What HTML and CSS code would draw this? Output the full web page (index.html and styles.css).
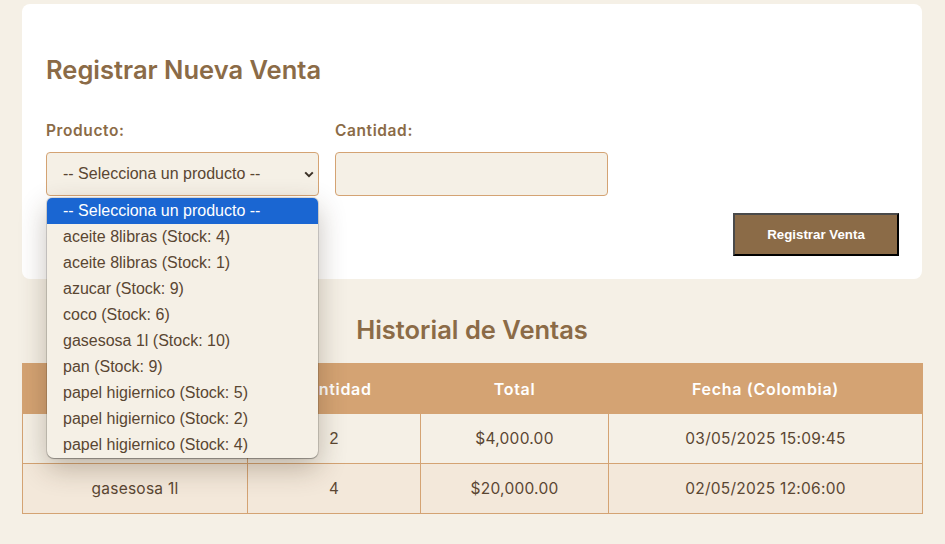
FILE: index.html
```html
<!DOCTYPE html>
<html lang="es">
<head>
<meta charset="utf-8">
<title>Ventas</title>
<link rel="stylesheet" href="styles.css">
</head>
<body>
<div class="container">
  <section class="card">
    <h2 class="title">Registrar Nueva Venta</h2>
    <div class="form-row">
      <div class="field">
        <label class="label">Producto:</label>
        <div class="select-wrap">
          <div class="select">
            <span>-- Selecciona un producto --</span>
            <svg class="chevron" width="10" height="7" viewBox="0 0 10 7"><path d="M1.2 1.4 L5 5.2 L8.8 1.4" fill="none" stroke="#3b3026" stroke-width="2"/></svg>
          </div>
          <ul class="dropdown">
            <li class="option selected">-- Selecciona un producto --</li>
            <li class="option">aceite 8libras (Stock: 4)</li>
            <li class="option">aceite 8libras (Stock: 1)</li>
            <li class="option">azucar (Stock: 9)</li>
            <li class="option">coco (Stock: 6)</li>
            <li class="option">gasesosa 1l (Stock: 10)</li>
            <li class="option">pan (Stock: 9)</li>
            <li class="option">papel higiernico (Stock: 5)</li>
            <li class="option">papel higiernico (Stock: 2)</li>
            <li class="option">papel higiernico (Stock: 4)</li>
          </ul>
        </div>
      </div>
      <div class="field">
        <label class="label">Cantidad:</label>
        <div class="input"></div>
      </div>
    </div>
    <div class="actions">
      <button class="btn">Registrar Venta</button>
    </div>
  </section>

  <h2 class="title center">Historial de Ventas</h2>
  <table class="table">
    <colgroup>
      <col class="c1"><col class="c2"><col class="c3"><col class="c4">
    </colgroup>
    <thead>
      <tr><th>Producto</th><th>Cantidad</th><th>Total</th><th>Fecha (Colombia)</th></tr>
    </thead>
    <tbody>
      <tr><td>pan</td><td class="num">2</td><td>$4,000.00</td><td>03/05/2025 15:09:45</td></tr>
      <tr class="alt"><td>gasesosa 1l</td><td class="num">4</td><td>$20,000.00</td><td>02/05/2025 12:06:00</td></tr>
    </tbody>
  </table>
</div>
</body>
</html>
```

FILE: styles.css
```css
* { box-sizing: border-box; }
body {
  margin: 0;
  background: #f5f0e6;
  font-family: Inter, "Noto Sans", sans-serif;
  color: #5a4632;
}
.container {
  width: 900px;
  margin: 0 23px 0 22px;
  padding-top: 4px;
}
.card {
  background: #ffffff;
  border-radius: 8px;
  padding: 24px 23px 23px 24px;
}
.title {
  margin: 24px 0 0;
  font-size: 25.5px;
  line-height: 36px;
  font-weight: 600;
  color: #8b6b47;
}
.title.center {
  text-align: center;
  margin: 33px 0 15px;
}
.form-row {
  display: grid;
  grid-template-columns: 273px 273px;
  column-gap: 16px;
  margin-top: 33px;
}
.label {
  display: block;
  font-size: 15.5px;
  letter-spacing: 0.6px;
  line-height: 20px;
  font-weight: 600;
  color: #8b6b47;
  margin-bottom: 11px;
}
.select-wrap { position: relative; }
.select, .input {
  height: 44px;
  border: 1px solid #d4a373;
  border-radius: 4px;
  background: #f5f0e6;
}
.select {
  display: flex;
  align-items: center;
  justify-content: space-between;
  padding: 0 4px 0 16px;
  font-family: "Liberation Sans", Arial, sans-serif;
  font-size: 16px;
  color: #5a4632;
}
.chevron { display: block; margin-top: 1px; }
.dropdown {
  position: absolute;
  top: 46px;
  left: 1px;
  width: 271px;
  margin: 0;
  padding: 0;
  list-style: none;
  background: #f5f0e6;
  border-radius: 5px 5px 7px 7px;
  overflow: hidden;
  box-shadow: 0 0 0 1px rgba(0,0,0,0.12), 0 1px 1px rgba(0,0,0,0.25), 0 10px 28px rgba(60,40,20,0.3);
  z-index: 10;
}
.option {
  height: 26px;
  line-height: 26px;
  padding-left: 16px;
  font-family: "Liberation Sans", Arial, sans-serif;
  font-size: 16px;
  color: #5a4632;
  white-space: nowrap;
}
.option.selected {
  background: #1a66d2;
  color: #ffffff;
}
.actions {
  display: flex;
  justify-content: flex-end;
  margin-top: 17px;
}
.btn {
  width: 166px;
  height: 43px;
  background: #8b6b47;
  color: #ffffff;
  font-family: "Liberation Sans", Arial, sans-serif;
  font-weight: 700;
  font-size: 13.3px;
  border-style: solid;
  border-width: 2px;
  border-color: #4a4a4a #000000 #000000 #4a4a4a;
  padding: 0;
}
.table {
  width: 900px;
  border-collapse: collapse;
  table-layout: fixed;
}
.c1 { width: 225px; }
.c2 { width: 173px; }
.c3 { width: 188px; }
.c4 { width: 314px; }
.table th, .table td {
  height: 50px;
  border: 1px solid #d4a373;
  text-align: center;
  padding: 0 4px;
}
.table th {
  background: #d4a373;
  color: #ffffff;
  font-weight: 600;
  font-size: 16px;
  letter-spacing: 0.7px;
}
.table td {
  color: #5a4632;
  background: #f5f0e6;
  font-size: 15.5px;
  letter-spacing: 0.25px;
}
.table tr.alt td { background: #f3e8da; }
.table td.num {
  font-family: "Liberation Sans", Arial, sans-serif;
  font-size: 16px;
  letter-spacing: 0;
}
```
